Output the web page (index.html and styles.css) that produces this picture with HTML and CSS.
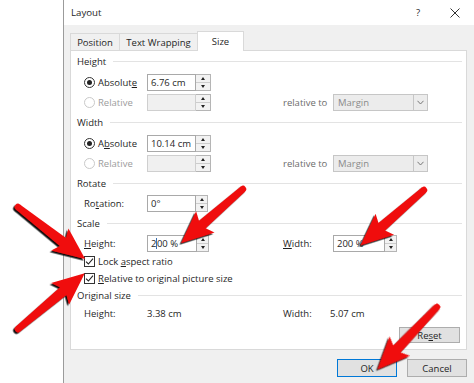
FILE: index.html
```html
<!DOCTYPE html>
<html>
<head>
<meta charset="utf-8">
<link rel="stylesheet" href="styles.css">
</head>
<body>
<div class="screen">
  <div class="desk"></div>
  <div class="dialog">
    <div class="titlebar">
      <span class="title">Layout</span>
      <span class="help">?</span>
      <svg class="close" width="10" height="10" viewBox="0 0 10 10"><path d="M0.5 0.5 L9.5 9.5 M9.5 0.5 L0.5 9.5" stroke="#333" stroke-width="1"/></svg>
    </div>
    <div class="content">
      <div class="tabs">
        <div class="tab tab-pos">Position</div>
        <div class="tab tab-wrap">Text Wrapping</div>
        <div class="tab tab-size active">Size</div>
      </div>
      <div class="panel">
        <div class="head">Height</div>
        <div class="row">
          <div class="opt"><span class="radio on"></span><span>Absolut<u>e</u></span></div>
          <div class="spin-input"><div class="field">6.76 cm</div><div class="spin"><span class="up"></span><span class="down"></span></div></div>
        </div>
        <div class="row">
          <div class="opt disabled"><span class="radio off"></span><span>Relative</span></div>
          <div class="spin-input"><div class="field dis"></div><div class="spin"><span class="up"></span><span class="down"></span></div></div>
          <div class="relto">relative to</div>
          <div class="select"><div class="val">Margin</div><div class="arr"><svg width="7" height="5" viewBox="0 0 7 5"><path d="M0.5 0.8 L3.5 4 L6.5 0.8" fill="none" stroke="#777" stroke-width="1"/></svg></div></div>
        </div>
        <div class="head">Width</div>
        <div class="row">
          <div class="opt"><span class="radio on"></span><span>A<u>b</u>solute</span></div>
          <div class="spin-input"><div class="field">10.14 cm</div><div class="spin"><span class="up"></span><span class="down"></span></div></div>
        </div>
        <div class="row">
          <div class="opt disabled"><span class="radio off"></span><span>Relative</span></div>
          <div class="spin-input"><div class="field dis"></div><div class="spin"><span class="up"></span><span class="down"></span></div></div>
          <div class="relto">relative to</div>
          <div class="select"><div class="val">Margin</div><div class="arr"><svg width="7" height="5" viewBox="0 0 7 5"><path d="M0.5 0.8 L3.5 4 L6.5 0.8" fill="none" stroke="#777" stroke-width="1"/></svg></div></div>
        </div>
        <div class="head">Rotate</div>
        <div class="row row-19">
          <div class="lbl">Ro<u>t</u>ation:</div>
          <div class="spin-input"><div class="field">0°</div><div class="spin narrow"><span class="up"></span><span class="down"></span></div></div>
        </div>
        <div class="head">Scale</div>
        <div class="row row-19">
          <div class="lbl"><u>H</u>eight:</div>
          <div class="spin-input"><div class="field wide"><span>2<span class="caret"></span>00 %</span></div><div class="spin narrow"><span class="up"></span><span class="down"></span></div></div>
          <div class="lbl-w"><u>W</u>idth:</div>
          <div class="spin-input"><div class="field wider">200 %</div><div class="spin narrow"><span class="up"></span><span class="down"></span></div></div>
        </div>
        <div class="row row-17">
          <span class="check"><svg width="9" height="9" viewBox="0 0 9 9"><path d="M1 4.6 L3.4 7 L8 1.6" fill="none" stroke="#222" stroke-width="1.1"/></svg></span><span>Lock <u>a</u>spect ratio</span>
        </div>
        <div class="row row-16">
          <span class="check"><svg width="9" height="9" viewBox="0 0 9 9"><path d="M1 4.6 L3.4 7 L8 1.6" fill="none" stroke="#222" stroke-width="1.1"/></svg></span><span><u>R</u>elative to original picture size</span>
        </div>
        <div class="head short">Original size</div>
        <div class="row row-17">
          <div class="lbl">Height:</div>
          <div class="val-h">3.38 cm</div>
          <div class="val-wl">Width:</div>
          <div>5.07 cm</div>
        </div>
        <div class="reset-row"><button class="btn reset">Re<u>s</u>et</button></div>
      </div>
      <div class="buttons">
        <button class="btn default">OK</button>
        <button class="btn">Cancel</button>
      </div>
    </div>
  </div>
  <svg class="arrows" width="474" height="383" viewBox="0 0 474 383">
    <defs>
      <filter id="sh" x="-20%" y="-20%" width="140%" height="140%">
        <feDropShadow dx="-1.6" dy="1.6" stdDeviation="0.7" flood-color="#000" flood-opacity="0.95"/>
      </filter>
    </defs>
    <g fill="#f01010" filter="url(#sh)">
      <g transform="translate(18 207) rotate(37.8)"><circle cx="0" cy="0" r="3.2"/><polygon points="0,-3.2 57,-5 53,-14 85,0 53,14 57,5 0,3.2"/></g>
      <g transform="translate(18 329) rotate(-39.9)"><circle cx="0" cy="0" r="3.2"/><polygon points="0,-3.2 59,-5 55,-14 87,0 55,14 59,5 0,3.2"/></g>
      <g transform="translate(243 189) rotate(138.9)"><circle cx="0" cy="0" r="3.2"/><polygon points="0,-3.2 54,-5 50,-14 82,0 50,14 54,5 0,3.2"/></g>
      <g transform="translate(424 190) rotate(138.9)"><circle cx="0" cy="0" r="3.2"/><polygon points="0,-3.2 56,-5 52,-14 84,0 52,14 56,5 0,3.2"/></g>
      <g transform="translate(437 307) rotate(133.6)"><circle cx="0" cy="0" r="3.2"/><polygon points="0,-3.2 58,-5 54,-14 86,0 54,14 58,5 0,3.2"/></g>
    </g>
  </svg>
</div>
</body>
</html>
```

FILE: styles.css
```css
* { box-sizing: border-box; }
html, body { margin: 0; padding: 0; }
body {
  width: 474px;
  height: 383px;
  overflow: hidden;
  background: #fff;
  font-family: "Open Sans", "Noto Sans", sans-serif;
  font-size: 9.5px;
  color: #1f1f1f;
}
u { text-underline-offset: 1px; }
.screen { position: relative; display: flex; width: 474px; height: 383px; }
.desk { width: 63px; background: #fff; }
.dialog {
  flex: 1;
  border-left: 1px solid #9b9b9b;
  background: #f0f0f0;
  display: flex;
  flex-direction: column;
}
.titlebar {
  height: 25px;
  background: #fff;
  display: flex;
  align-items: center;
  padding-left: 7px;
}
.title { flex: 1; font-size: 9.7px; }
.help { width: 8px; margin-right: 28px; text-align: center; font-size: 9.6px; }
.close { margin-right: 14px; }
.content {
  flex: 1;
  padding: 0 7px 0 6px;
  display: flex;
  flex-direction: column;
}
.tabs { height: 25px; display: flex; align-items: flex-end; }
.tab {
  height: 17px;
  border: 1px solid #d9d9d9;
  border-bottom: none;
  background: #f0f0f0;
  margin-right: -1px;
  display: flex;
  align-items: center;
  justify-content: center;
}
.tab-pos { width: 50px; }
.tab-wrap { width: 79px; }
.tab-size { width: 47px; }
.tab.active {
  height: 20px;
  background: #fff;
  margin-bottom: -1px;
  position: relative;
  z-index: 1;
}
.panel {
  height: 300px;
  border: 1px solid #d9d9d9;
  background: #fff;
  display: flex;
  flex-direction: column;
  padding-right: 4px;
}
.head {
  height: 21px;
  display: flex;
  align-items: center;
  padding-left: 6px;
}
.head.short { height: 19px; }
.head::after {
  content: "";
  flex: 1;
  height: 1px;
  background: #e3e3e3;
  margin-left: 7px;
}
.row {
  height: 20px;
  display: flex;
  align-items: center;
  padding-left: 13px;
  white-space: nowrap;
}
.row-19 { height: 19px; }
.row-17 { height: 17px; }
.row-16 { height: 16px; }
.opt { width: 63px; display: flex; align-items: center; }
.lbl { width: 63px; }
.radio {
  width: 11px;
  height: 11px;
  border-radius: 50%;
  border: 1px solid #333;
  background: #fff;
  margin-right: 3px;
  display: flex;
  align-items: center;
  justify-content: center;
}
.radio.on::after {
  content: "";
  width: 5px;
  height: 5px;
  border-radius: 50%;
  background: #222;
}
.radio.off { border-color: #c9c9c9; }
.disabled { color: #9c9c9c; }
.spin-input { display: flex; height: 17px; }
.field {
  width: 49px;
  border: 1px solid #a9a9a9;
  background: #fff;
  padding-left: 3px;
  display: flex;
  align-items: center;
  white-space: nowrap;
}
.field.wide { width: 50px; }
.field.wider { width: 52px; }
.field.dis { background: #f0f0f0; border-color: #cfcfcf; }
.caret { display: inline-block; width: 1px; height: 11px; background: #3a6fb0; vertical-align: -2px; margin-left: -0.5px; }
.spin {
  width: 15px;
  border: 1px solid #b5b5b5;
  border-left: none;
  background: #f2f2f2;
  display: flex;
  flex-direction: column;
}
.spin.narrow { width: 12px; }
.spin span { flex: 1; display: flex; align-items: center; justify-content: center; }
.spin span + span { border-top: 1px solid #cdcdcd; }
.up::after, .down::after {
  content: "";
  border-left: 2.5px solid transparent;
  border-right: 2.5px solid transparent;
}
.up::after { border-bottom: 3px solid #222; }
.down::after { border-top: 3px solid #222; }
.relto { margin-left: 72px; width: 50px; color: #6c6c6c; }
.select {
  width: 95px;
  height: 17px;
  border: 1px solid #c6c6c6;
  background: #ececec;
  display: flex;
}
.select .val { flex: 1; padding-left: 4px; color: #8a8a8a; display: flex; align-items: center; }
.select .arr {
  width: 14px;
  border-left: 1px solid #c6c6c6;
  display: flex;
  align-items: center;
  justify-content: center;
}
.lbl-w { margin-left: 74px; width: 50px; }
.check {
  width: 11px;
  height: 11px;
  border: 1px solid #333;
  background: #fff;
  margin-right: 3px;
  display: flex;
  align-items: center;
  justify-content: center;
}
.val-h { width: 136px; }
.val-wl { width: 47px; }
.reset-row {
  flex: 1;
  display: flex;
  justify-content: flex-end;
  align-items: flex-start;
  padding-top: 5px;
  padding-right: 2px;
}
.btn {
  width: 60px;
  height: 18px;
  border: 1px solid #adadad;
  background: #e1e1e1;
  font: inherit;
  color: #1f1f1f;
  padding: 0;
}
.btn.reset { width: 61px; height: 16px; }
.btn.default { border-color: #0078d7; }
.buttons {
  display: flex;
  justify-content: flex-end;
  gap: 10px;
  padding-top: 9px;
}
.arrows { position: absolute; left: 0; top: 0; pointer-events: none; }
```
